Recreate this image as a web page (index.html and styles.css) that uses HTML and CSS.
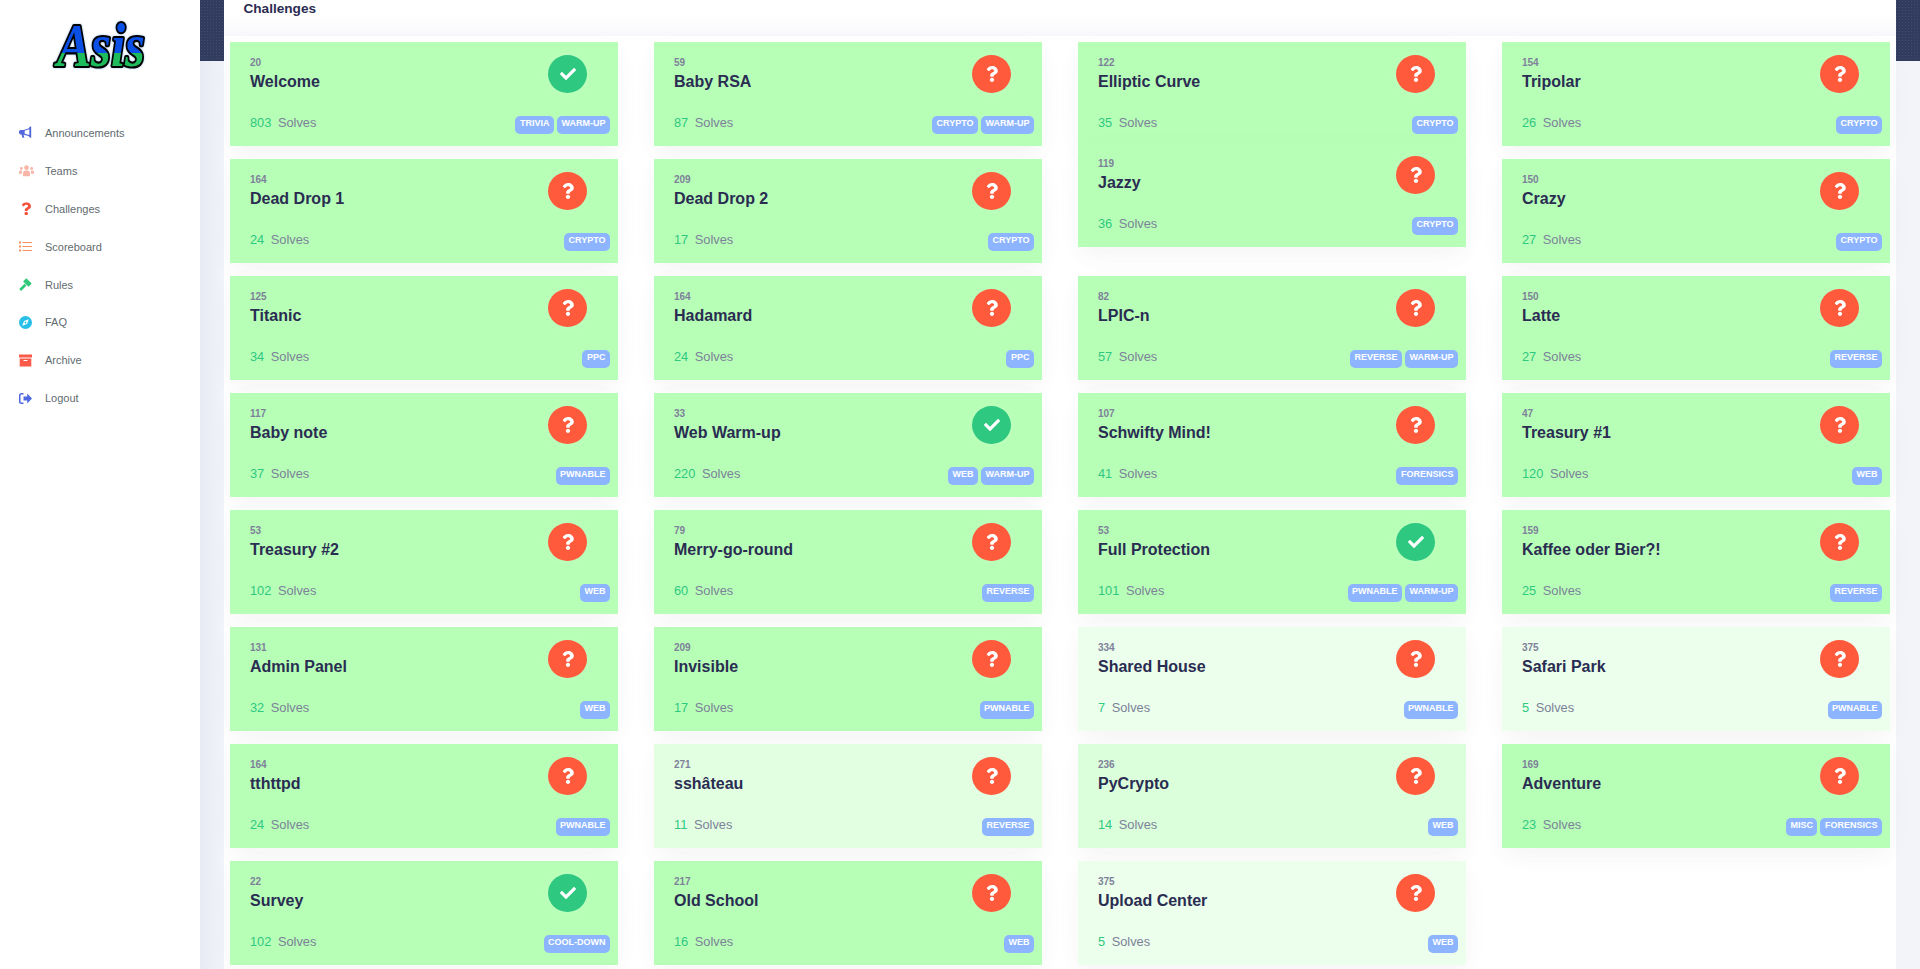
FILE: index.html
```html
<!DOCTYPE html>
<html lang="en">
<head>
<meta charset="utf-8">
<title>Challenges</title>
<link rel="stylesheet" href="styles.css">
</head>
<body>
<svg class="sprite" aria-hidden="true">
  <symbol id="i-q" viewBox="0 0 384 512"><path d="M202.021 0C122.202 0 70.503 32.703 29.914 91.026c-7.363 10.58-5.093 25.086 5.178 32.874l43.138 32.709c10.373 7.865 25.132 6.026 33.253-4.148 25.049-31.381 43.63-49.449 82.757-49.449 30.764 0 68.816 19.799 68.816 49.631 0 22.552-18.617 34.134-48.993 51.164-35.423 19.86-82.299 44.576-82.299 106.405V320c0 13.255 10.745 24 24 24h72.471c13.255 0 24-10.745 24-24v-5.773c0-42.86 125.268-44.645 125.268-160.627C377.504 66.256 286.902 0 202.021 0zM192 373.459c-38.196 0-69.271 31.075-69.271 69.271 0 38.195 31.075 69.27 69.271 69.27s69.271-31.075 69.271-69.271-31.075-69.27-69.271-69.27z"/></symbol>
  <symbol id="i-c" viewBox="0 0 512 512"><path d="M173.898 439.404l-166.4-166.4c-9.997-9.997-9.997-26.206 0-36.204l36.203-36.204c9.997-10 26.207-10 36.204 0L192 312.69 432.095 72.596c9.997-9.997 26.207-9.997 36.204 0l36.203 36.204c9.997 9.997 9.997 26.206 0 36.204l-294.4 294.401c-9.998 9.997-26.207 9.997-36.204-.001z"/></symbol>
</svg>
<div class="band"></div>
<div class="layout">
  <aside class="sidebar">
    <div class="logo">
      <svg viewBox="0 0 100 56" width="100" height="56" role="img" aria-label="Asis">
        <defs>
          <linearGradient id="logofill" x1="0" y1="0" x2="0" y2="1">
            <stop offset="0.62" stop-color="#0a50e6"/>
            <stop offset="0.62" stop-color="#1dbb5c"/>
          </linearGradient>
        </defs>
        <text class="logo-text" x="50" y="47" text-anchor="middle" textLength="88" lengthAdjust="spacingAndGlyphs" fill="url(#logofill)">Asis</text>
      </svg>
    </div>
    <nav class="nav">
      <a class="nav-item"><svg class="nav-icon c-blue" viewBox="0 0 16 16"><path fill-rule="evenodd" d="M15 .6v13.8h-1.3L11.6 12.4 5.6 10.8l1 3.7H4.2L3.2 10.600H1.600L0 9V6.300L1.600 4.800H6L11.600 3 13.700.6zM12.700 4 7 5.900V9.500l5.700 1.700z"/></svg><span>Announcements</span></a>
      <a class="nav-item"><svg class="nav-icon wide c-peach" viewBox="0 0 16 12"><circle cx="8" cy="3" r="2.500"/><circle cx="2.500" cy="3.800" r="1.500"/><circle cx="13.500" cy="3.800" r="1.500"/><path d="M4.300 12V8.500C4.300 7 5.500 6 7 6h2c1.500 0 2.700 1 2.700 2.500V12zM0 9.500V7.500C0 6.600.700 6 1.500 6h1.700C3 6.700 3.200 8 3.200 9.500zM16 9.500V7.500C16 6.600 15.300 6 14.500 6h-1.700c.2.700 0 2 0 3.500z"/></svg><span>Teams</span></a>
      <a class="nav-item"><svg class="nav-icon c-red2" viewBox="-30 -10 520 530"><use href="#i-q"/></svg><span>Challenges</span></a>
      <a class="nav-item"><svg class="nav-icon c-orange" viewBox="0 0 13 11"><path d="M0 .5h2v2H0zM3.500 1H13v1H3.500zM0 4.500h2v2H0zM3.500 5H13v1H3.500zM0 8.500h2v2H0zM3.500 9H13v1H3.500z"/></svg><span>Scoreboard</span></a>
      <a class="nav-item"><svg class="nav-icon c-green" viewBox="0 0 13 13"><path d="M7.300.3 12.700 5.500 9.600 8.700 4.100 3.500zM5.600 5.700 7.500 7.600 2.200 12.900.2 11z"/></svg><span>Rules</span></a>
      <a class="nav-item"><svg class="nav-icon c-cyan" viewBox="0 0 13 13"><path fill-rule="evenodd" d="M6.500 0a6.500 6.500 0 1 0 0 13 6.500 6.500 0 0 0 0-13zM9.800 3.200 8 8 3.200 9.800 5 5zM6.500 5.600a.9.900 0 1 0 0 1.800.9.900 0 0 0 0-1.800z"/></svg><span>FAQ</span></a>
      <a class="nav-item"><svg class="nav-icon c-coral" viewBox="0 0 13 12"><path fill-rule="evenodd" d="M0 0h13v3H0zM.7 3.900h11.600V12H.7zM4.500 5.500v1.100h4V5.500z"/></svg><span>Archive</span></a>
      <a class="nav-item"><svg class="nav-icon c-indigo" viewBox="0 0 13 11"><path d="M13 5.500 8.200.5v3H4.500v4h3.700v3zM4.500 0H2.300C1 0 0 1 0 2.300v6.400C0 10 1 11 2.300 11h2.200V9.500H2.500c-.6 0-1-.4-1-1v-6c0-.6.400-1 1-1h2z"/></svg><span>Logout</span></a>
    </nav>
  </aside>
  <main class="main">
    <div class="panel">
      <h1 class="panel-title">Challenges</h1>
      <div class="grid">
        <article class="card"><div class="card-top"><div class="info"><div class="points">20</div><h2 class="name">Welcome</h2></div><div class="status ok"><svg viewBox="0 0 512 512"><use href="#i-c"/></svg></div></div><div class="card-bottom"><div class="solves"><b>803</b>Solves</div><div class="tags"><span class="tag">TRIVIA</span><span class="tag">WARM-UP</span></div></div></article>
        <article class="card"><div class="card-top"><div class="info"><div class="points">59</div><h2 class="name">Baby RSA</h2></div><div class="status no"><svg viewBox="0 0 384 512"><use href="#i-q"/></svg></div></div><div class="card-bottom"><div class="solves"><b>87</b>Solves</div><div class="tags"><span class="tag">CRYPTO</span><span class="tag">WARM-UP</span></div></div></article>
        <article class="card"><div class="card-top"><div class="info"><div class="points">122</div><h2 class="name">Elliptic Curve</h2></div><div class="status no"><svg viewBox="0 0 384 512"><use href="#i-q"/></svg></div></div><div class="card-bottom"><div class="solves"><b>35</b>Solves</div><div class="tags"><span class="tag">CRYPTO</span></div></div></article>
        <article class="card"><div class="card-top"><div class="info"><div class="points">154</div><h2 class="name">Tripolar</h2></div><div class="status no"><svg viewBox="0 0 384 512"><use href="#i-q"/></svg></div></div><div class="card-bottom"><div class="solves"><b>26</b>Solves</div><div class="tags"><span class="tag">CRYPTO</span></div></div></article>

        <article class="card"><div class="card-top"><div class="info"><div class="points">164</div><h2 class="name">Dead Drop 1</h2></div><div class="status no"><svg viewBox="0 0 384 512"><use href="#i-q"/></svg></div></div><div class="card-bottom"><div class="solves"><b>24</b>Solves</div><div class="tags"><span class="tag">CRYPTO</span></div></div></article>
        <article class="card"><div class="card-top"><div class="info"><div class="points">209</div><h2 class="name">Dead Drop 2</h2></div><div class="status no"><svg viewBox="0 0 384 512"><use href="#i-q"/></svg></div></div><div class="card-bottom"><div class="solves"><b>17</b>Solves</div><div class="tags"><span class="tag">CRYPTO</span></div></div></article>
        <article class="card raised"><div class="card-top"><div class="info"><div class="points">119</div><h2 class="name">Jazzy</h2></div><div class="status no"><svg viewBox="0 0 384 512"><use href="#i-q"/></svg></div></div><div class="card-bottom"><div class="solves"><b>36</b>Solves</div><div class="tags"><span class="tag">CRYPTO</span></div></div></article>
        <article class="card"><div class="card-top"><div class="info"><div class="points">150</div><h2 class="name">Crazy</h2></div><div class="status no"><svg viewBox="0 0 384 512"><use href="#i-q"/></svg></div></div><div class="card-bottom"><div class="solves"><b>27</b>Solves</div><div class="tags"><span class="tag">CRYPTO</span></div></div></article>

        <article class="card"><div class="card-top"><div class="info"><div class="points">125</div><h2 class="name">Titanic</h2></div><div class="status no"><svg viewBox="0 0 384 512"><use href="#i-q"/></svg></div></div><div class="card-bottom"><div class="solves"><b>34</b>Solves</div><div class="tags"><span class="tag">PPC</span></div></div></article>
        <article class="card"><div class="card-top"><div class="info"><div class="points">164</div><h2 class="name">Hadamard</h2></div><div class="status no"><svg viewBox="0 0 384 512"><use href="#i-q"/></svg></div></div><div class="card-bottom"><div class="solves"><b>24</b>Solves</div><div class="tags"><span class="tag">PPC</span></div></div></article>
        <article class="card"><div class="card-top"><div class="info"><div class="points">82</div><h2 class="name">LPIC-n</h2></div><div class="status no"><svg viewBox="0 0 384 512"><use href="#i-q"/></svg></div></div><div class="card-bottom"><div class="solves"><b>57</b>Solves</div><div class="tags"><span class="tag">REVERSE</span><span class="tag">WARM-UP</span></div></div></article>
        <article class="card"><div class="card-top"><div class="info"><div class="points">150</div><h2 class="name">Latte</h2></div><div class="status no"><svg viewBox="0 0 384 512"><use href="#i-q"/></svg></div></div><div class="card-bottom"><div class="solves"><b>27</b>Solves</div><div class="tags"><span class="tag">REVERSE</span></div></div></article>

        <article class="card"><div class="card-top"><div class="info"><div class="points">117</div><h2 class="name">Baby note</h2></div><div class="status no"><svg viewBox="0 0 384 512"><use href="#i-q"/></svg></div></div><div class="card-bottom"><div class="solves"><b>37</b>Solves</div><div class="tags"><span class="tag">PWNABLE</span></div></div></article>
        <article class="card"><div class="card-top"><div class="info"><div class="points">33</div><h2 class="name">Web Warm-up</h2></div><div class="status ok"><svg viewBox="0 0 512 512"><use href="#i-c"/></svg></div></div><div class="card-bottom"><div class="solves"><b>220</b>Solves</div><div class="tags"><span class="tag">WEB</span><span class="tag">WARM-UP</span></div></div></article>
        <article class="card"><div class="card-top"><div class="info"><div class="points">107</div><h2 class="name">Schwifty Mind!</h2></div><div class="status no"><svg viewBox="0 0 384 512"><use href="#i-q"/></svg></div></div><div class="card-bottom"><div class="solves"><b>41</b>Solves</div><div class="tags"><span class="tag">FORENSICS</span></div></div></article>
        <article class="card"><div class="card-top"><div class="info"><div class="points">47</div><h2 class="name">Treasury #1</h2></div><div class="status no"><svg viewBox="0 0 384 512"><use href="#i-q"/></svg></div></div><div class="card-bottom"><div class="solves"><b>120</b>Solves</div><div class="tags"><span class="tag">WEB</span></div></div></article>

        <article class="card"><div class="card-top"><div class="info"><div class="points">53</div><h2 class="name">Treasury #2</h2></div><div class="status no"><svg viewBox="0 0 384 512"><use href="#i-q"/></svg></div></div><div class="card-bottom"><div class="solves"><b>102</b>Solves</div><div class="tags"><span class="tag">WEB</span></div></div></article>
        <article class="card"><div class="card-top"><div class="info"><div class="points">79</div><h2 class="name">Merry-go-round</h2></div><div class="status no"><svg viewBox="0 0 384 512"><use href="#i-q"/></svg></div></div><div class="card-bottom"><div class="solves"><b>60</b>Solves</div><div class="tags"><span class="tag">REVERSE</span></div></div></article>
        <article class="card"><div class="card-top"><div class="info"><div class="points">53</div><h2 class="name">Full Protection</h2></div><div class="status ok"><svg viewBox="0 0 512 512"><use href="#i-c"/></svg></div></div><div class="card-bottom"><div class="solves"><b>101</b>Solves</div><div class="tags"><span class="tag">PWNABLE</span><span class="tag">WARM-UP</span></div></div></article>
        <article class="card"><div class="card-top"><div class="info"><div class="points">159</div><h2 class="name">Kaffee oder Bier?!</h2></div><div class="status no"><svg viewBox="0 0 384 512"><use href="#i-q"/></svg></div></div><div class="card-bottom"><div class="solves"><b>25</b>Solves</div><div class="tags"><span class="tag">REVERSE</span></div></div></article>

        <article class="card"><div class="card-top"><div class="info"><div class="points">131</div><h2 class="name">Admin Panel</h2></div><div class="status no"><svg viewBox="0 0 384 512"><use href="#i-q"/></svg></div></div><div class="card-bottom"><div class="solves"><b>32</b>Solves</div><div class="tags"><span class="tag">WEB</span></div></div></article>
        <article class="card"><div class="card-top"><div class="info"><div class="points">209</div><h2 class="name">Invisible</h2></div><div class="status no"><svg viewBox="0 0 384 512"><use href="#i-q"/></svg></div></div><div class="card-bottom"><div class="solves"><b>17</b>Solves</div><div class="tags"><span class="tag">PWNABLE</span></div></div></article>
        <article class="card pale"><div class="card-top"><div class="info"><div class="points">334</div><h2 class="name">Shared House</h2></div><div class="status no"><svg viewBox="0 0 384 512"><use href="#i-q"/></svg></div></div><div class="card-bottom"><div class="solves"><b>7</b>Solves</div><div class="tags"><span class="tag">PWNABLE</span></div></div></article>
        <article class="card pale"><div class="card-top"><div class="info"><div class="points">375</div><h2 class="name">Safari Park</h2></div><div class="status no"><svg viewBox="0 0 384 512"><use href="#i-q"/></svg></div></div><div class="card-bottom"><div class="solves"><b>5</b>Solves</div><div class="tags"><span class="tag">PWNABLE</span></div></div></article>

        <article class="card"><div class="card-top"><div class="info"><div class="points">164</div><h2 class="name">tthttpd</h2></div><div class="status no"><svg viewBox="0 0 384 512"><use href="#i-q"/></svg></div></div><div class="card-bottom"><div class="solves"><b>24</b>Solves</div><div class="tags"><span class="tag">PWNABLE</span></div></div></article>
        <article class="card light"><div class="card-top"><div class="info"><div class="points">271</div><h2 class="name">sshâteau</h2></div><div class="status no"><svg viewBox="0 0 384 512"><use href="#i-q"/></svg></div></div><div class="card-bottom"><div class="solves"><b>11</b>Solves</div><div class="tags"><span class="tag">REVERSE</span></div></div></article>
        <article class="card mid"><div class="card-top"><div class="info"><div class="points">236</div><h2 class="name">PyCrypto</h2></div><div class="status no"><svg viewBox="0 0 384 512"><use href="#i-q"/></svg></div></div><div class="card-bottom"><div class="solves"><b>14</b>Solves</div><div class="tags"><span class="tag">WEB</span></div></div></article>
        <article class="card"><div class="card-top"><div class="info"><div class="points">169</div><h2 class="name">Adventure</h2></div><div class="status no"><svg viewBox="0 0 384 512"><use href="#i-q"/></svg></div></div><div class="card-bottom"><div class="solves"><b>23</b>Solves</div><div class="tags"><span class="tag">MISC</span><span class="tag">FORENSICS</span></div></div></article>

        <article class="card"><div class="card-top"><div class="info"><div class="points">22</div><h2 class="name">Survey</h2></div><div class="status ok"><svg viewBox="0 0 512 512"><use href="#i-c"/></svg></div></div><div class="card-bottom"><div class="solves"><b>102</b>Solves</div><div class="tags"><span class="tag">COOL-DOWN</span></div></div></article>
        <article class="card"><div class="card-top"><div class="info"><div class="points">217</div><h2 class="name">Old School</h2></div><div class="status no"><svg viewBox="0 0 384 512"><use href="#i-q"/></svg></div></div><div class="card-bottom"><div class="solves"><b>16</b>Solves</div><div class="tags"><span class="tag">WEB</span></div></div></article>
        <article class="card pale"><div class="card-top"><div class="info"><div class="points">375</div><h2 class="name">Upload Center</h2></div><div class="status no"><svg viewBox="0 0 384 512"><use href="#i-q"/></svg></div></div><div class="card-bottom"><div class="solves"><b>5</b>Solves</div><div class="tags"><span class="tag">WEB</span></div></div></article>
      </div>
    </div>
  </main>
</div>
</body>
</html>
```
FILE: styles.css
```css
* { box-sizing: border-box; }
html, body { margin: 0; height: 100%; overflow: hidden; }
body {
  font-family: "Liberation Sans", Arial, sans-serif;
  background: #f1f3fa;
  color: #2a2c52;
  position: relative;
}
.sprite { position: absolute; width: 0; height: 0; }

.band {
  position: absolute;
  left: 200px;
  right: 0;
  top: 0;
  height: 61px;
  background-color: #323c5e;
  background-image: radial-gradient(circle, rgba(255, 255, 255, .08) .7px, transparent 1px);
  background-size: 3px 3px;
}

.layout { position: relative; display: flex; height: 969px; }

.sidebar { flex: 0 0 200px; background: #fff; }
.logo { display: flex; justify-content: center; padding: 19px 0 0 2px; height: 114px; }
.logo svg { display: block; overflow: visible; filter: drop-shadow(0 0 1px #9fc4ee); }
.logo-text {
  font-family: "Liberation Serif", serif;
  font-weight: 700;
  font-style: italic;
  font-size: 62px;
  stroke: #000;
  stroke-width: 4.2px;
  paint-order: stroke;
  stroke-linejoin: round;
}

.nav { display: flex; flex-direction: column; }
.nav-item {
  display: flex;
  align-items: center;
  height: 37.9px;
  padding-left: 19px;
  font-size: 11px;
  color: #5f6b70;
}
.nav-icon { flex: 0 0 13px; width: 13px; height: 13px; margin-right: 13px; fill: currentColor; }
.nav-icon.wide { flex-basis: 15px; width: 15px; margin-right: 11px; }
.c-blue { color: #5268dc; }
.c-peach { color: #f9b5a8; }
.c-red2 { color: #f6503a; }
.c-orange { color: #f6925c; }
.c-green { color: #2fc878; }
.c-cyan { color: #27bfe9; }
.c-coral { color: #fa5a48; }
.c-indigo { color: #5069e2; }

.main {
  flex: 1;
  min-width: 0;
  padding: 0 24px;
  background: linear-gradient(90deg, #e7eaf3, #f2f4fa 24px) 0 61px no-repeat;
}

.panel {
  height: 969px;
  background: #fff;
}
.panel-title {
  margin: 0;
  height: 36px;
  padding: 1px 0 0 19.5px;
  font-size: 13.6px;
  line-height: 15px;
  font-weight: 700;
  color: #2a2c52;
  background: linear-gradient(#fff 15px, #f8f8fb);
}

.grid {
  display: grid;
  grid-template-columns: repeat(4, 388px);
  grid-auto-rows: 104px;
  column-gap: 36px;
  row-gap: 13px;
  padding: 6px 6px 0;
  background: #fff;
}

.card {
  display: flex;
  flex-direction: column;
  justify-content: space-between;
  height: 104px;
  padding: 13px 8px 12px 20px;
  background: #b7ffb7;
  box-shadow: 0 7.5px 35px rgba(4, 9, 20, .025), 0 10px 20px rgba(4, 9, 20, .025);
}
.card.raised { margin-top: -16px; }
.card.pale { background: #ecffec; }
.card.light { background: #e2ffe2; }
.card.mid { background: #dbffdb; }

.card-top { display: flex; justify-content: space-between; padding-right: 23px; }
.info { padding-top: 2px; }
.points { font-size: 10px; line-height: 12px; font-weight: 700; color: #7e8199; }
.name { margin: 3px 0 0; font-size: 16px; line-height: 20px; font-weight: 700; color: #2a2c52; }

.status {
  flex: 0 0 39px;
  height: 38px;
  border-radius: 50%;
  display: flex;
  align-items: center;
  justify-content: center;
  fill: #fff;
  box-shadow: 0 0 10px rgba(255, 255, 255, .12);
}
.status svg { display: block; }
.status.ok { background: #2ec880; }
.status.ok svg { width: 16px; height: 16px; }
.status.no { background: #ff5a3c; }
.status.no svg { width: 12px; height: 16px; }

.card-bottom { display: flex; justify-content: space-between; align-items: flex-end; }
.solves { font-size: 12.8px; line-height: 16px; color: #7c8199; padding-bottom: 3px; }
.solves b { font-weight: 400; color: #2ec880; margin-right: 6.6px; }

.tags { display: flex; gap: 3px; }
.tag {
  height: 18px;
  padding: 0 4.5px;
  border-radius: 5px;
  background: #8db5ff;
  color: #fff;
  font-size: 9px;
  line-height: 15.5px;
  font-weight: 700;
}
```
